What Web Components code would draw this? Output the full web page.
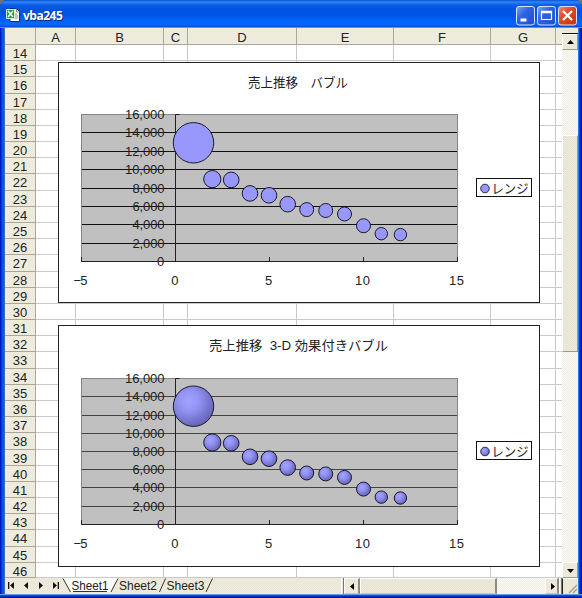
<!DOCTYPE html>
<html lang="ja">
<head>
<meta charset="utf-8">
<title>vba245</title>
<style>
html,body{margin:0;width:582px;height:598px;overflow:hidden;background:#75736b}
body{font:13px "Liberation Sans","Noto Sans CJK JP",sans-serif;color:#222}
</style>
</head>
<body>
<book-window>
  <title-bar slot="title">vba245</title-bar>
  <sheet-grid>
    <bubble-chart style="top:34px" caption="売上推移&#12288;バブル" tx="248" tw="100" top="62" bottom="302"
      lines="114,132,151,169,188,206,224,243,261" dy="0" legend="レンジ"></bubble-chart>
    <bubble-chart style="top:297px" caption="売上推移  3-D 効果付きバブル" tx="209" tw="179" top="325" bottom="566"
      lines="378,396,415,433,451,469,487,506,524" dy="263.4" legend="レンジ" relief></bubble-chart>
  </sheet-grid>
  <scroll-bar slot="side"></scroll-bar>
  <sheet-tabs slot="foot"></sheet-tabs>
</book-window>
<script>
const dither = (a, b) => `repeating-conic-gradient(${a} 0 25%,${b} 0 50%) 0 0/2px 2px`;
const define = (name, build) => customElements.define(name, class extends HTMLElement {
  connectedCallback() {
    if (!this.shadowRoot) this.attachShadow({mode: 'open'}).innerHTML = build(this);
  }
});

define('book-window', () => `<style>
:host{display:flex;flex-direction:column;box-sizing:border-box;width:582px;height:598px;border-radius:7px 7px 0 0;overflow:hidden;
 background:linear-gradient(90deg,#0019c8 0 1px,#0738de 1px 2px,#0455ea 2px 4px,#3c6fb4 4px 5px,transparent 5px 577px,#cfe0f4 577px 578px,#2a78f0 578px 579px,#0443dc 579px 580px,#0028b8 580px 581px,#001590 581px) 0 28px/582px 567px no-repeat,#0443dc}
main{display:grid;grid-template-columns:557px 16px;grid-template-rows:550px;padding-left:5px;overflow:hidden}
.foot{height:16px;padding:0 4px 0 5px}
.edge{height:4px;background:linear-gradient(#5f9cf0 0 1px,#0450e8 1px 2px,#0030c8 2px 3px,#00129a 3px)}
</style><slot name="title"></slot><main><slot></slot><slot name="side"></slot></main>
<div class="foot"><slot name="foot"></slot></div><div class="edge"></div>`);

define('title-bar', () => `<style>
:host{display:flex;align-items:center;box-sizing:border-box;height:28px;padding:3px 5px 0 6px;
 background:linear-gradient(#0a50d0 0,#2e86f8 2px,#0c5ee8 5px,#0054e0 9px,#0054e4 15px,#0464f8 21px,#0566fa 25px,#0048cc 27px,#6a93bd 27px)}
.name{flex:1;padding-left:3px;font:bold 12px "Open Sans",sans-serif;letter-spacing:-.5px;color:#fff;text-shadow:1px 1px #0a2a80;line-height:18px}
.buttons{display:flex;gap:2px}
</style>
<svg width="14" height="15" viewBox="0 0 14 15"><path d="M4 .5h6.5l3 3v10h-9.5z" fill="#fff" stroke="#123070"/><path d="M10.5 1v3h3M8 6h3M8 8h4M8 10h4" fill="none" stroke="#888"/><path d="M.5 1.5h8v9h-8z" fill="#2b9440" stroke="#d8f0d0"/><path d="M2 3l5 6M7 3L2 9" stroke="#fff" stroke-width="1.5"/></svg>
<span class="name"><slot></slot></span>
<span class="buttons">
${[['#2f63e0','M4.5 14h6'],['#2f63e0','M4.5 5.5h10v8h-10z'],['#de4a24','M5 5l9 9M14 5l-9 9']].map(([c, d], i) => `<svg width="19" height="20" viewBox="0 0 19 20"><defs><linearGradient id="face${i}" x1="0" y1="0" x2="1" y2="1"><stop offset="0" stop-color="${i == 2 ? '#f09070' : '#7ca4f8'}"/><stop offset=".4" stop-color="${c}"/><stop offset="1" stop-color="${i == 2 ? '#c83208' : '#1c50d0'}"/></linearGradient></defs><rect x=".5" y=".5" width="18" height="18.5" rx="2.5" fill="url(#face${i})" stroke="#d4e2fc"/><path d="${d}" fill="none" stroke="#fff" stroke-width="${i == 0 ? 3 : i == 1 ? 1.2 : 2.3}"/>${i == 1 ? '<path d="M4 6h11" stroke="#fff" stroke-width="2.5"/>' : ''}</svg>`).join('')}
</span>`);

const edge = k => Math.floor(44.5 + 16.18 * k) - 28;
const columns = [['', 31], ['A', 40], ['B', 88], ['C', 24], ['D', 109], ['E', 97], ['F', 97], ['G', 65], ['', 6]];
define('sheet-grid', () => {
  const tracks = [17, ...Array.from({length: 33}, (_, k) => (k == 32 ? 550 : edge(k + 1) + 1) - (edge(k) + 1))];
  let cells = '';
  tracks.forEach((_, r) => columns.forEach(([label], c) => {
    const head = r == 0 || c == 0;
    cells += `<div class="${head ? 'head' : 'cell'}${c == 0 && r ? ' row' : ''}">${r == 0 ? label : c == 0 ? r + 13 : ''}</div>`;
  }));
  return `<style>
:host{display:block;position:relative;width:557px;height:550px;overflow:hidden;background:#fff}
.grid{display:grid;grid-template-columns:${columns.map(c => c[1] + 'px').join(' ')};grid-template-rows:${tracks.map(t => t + 'px').join(' ')}}
.grid>div{box-sizing:border-box;border-right:1px solid #c9c9c9;border-bottom:1px solid #cacace;min-width:0;overflow:hidden}
.grid>.head{background:${dither('#ece9d8', '#efeee3')};border-color:#aaa799;font-size:13px;line-height:20px;text-align:center}
.grid>.row{line-height:18px}
.grid>div:nth-child(9n){border-right:0}
</style><div class="grid">${cells}</div><slot></slot>`;
});

const points = [[193.5,142.8,20.2],[212.3,179.1,8.6],[231.2,179.9,7.8],[250,193.4,7.8],[269,195.3,7.8],[287.7,204.2,7.8],[306.7,209.6,7],[325.7,210.5,7],[344.5,214,7],[363.5,225.7,7],[381.3,233.7,6.2],[400.4,234.6,6.2]];
define('bubble-chart', el => {
  const at = n => el.getAttribute(n), top = +at('top'), h = at('bottom') - top + 1;
  const ys = at('lines').split(',').map(Number), last = ys[8], relief = el.hasAttribute('relief');
  const grid = relief ? '#44443e' : '#111';
  const legendTop = relief ? 441 : 178;
  return `<style>
:host{display:block;position:absolute;left:53px;width:482px;height:${h}px}
svg{display:block}
text{font:13px "Liberation Sans","Noto Sans CJK JP",sans-serif;fill:#222}
</style><svg width="482" height="${h}" viewBox="58 ${top} 482 ${h}">
<defs><radialGradient id="ball" cx=".38" cy=".36" r=".66"><stop offset="0" stop-color="#a3a3ff"/><stop offset=".4" stop-color="#9292f4"/><stop offset="1" stop-color="#6464b8"/></radialGradient></defs>
<rect x="58.5" y="${top + .5}" width="481" height="${h - 1}" fill="#fff" stroke="#222"/>
<text x="${at('tx')}" y="${top + 24.5}" textLength="${at('tw')}" lengthAdjust="spacingAndGlyphs" xml:space="preserve">${at('caption')}</text>
<rect x="81.5" y="${ys[0] + .5}" width="376" height="${last - ys[0]}" fill="#c0c0c0" stroke="#858585"/>
${ys.slice(1, 8).map(y => `<path d="M82 ${y + .5}h375" stroke="${grid}"/>`).join('')}
<path d="M81.5 ${last - 4}v4.5h376v-4.5M269.5 ${last - 4}v4M363.5 ${last - 4}v4M175.5 ${last}V${ys[0] + .5}h4" fill="none" stroke="#222"/>
${ys.map((y, i) => { const v = (16000 - i * 2000).toLocaleString('en-US'), w = v.length == 6 ? 39.5 : v.length == 5 ? 32 : 7.5; return `<text x="${164.5 - w}" y="${y + 5.3}" textLength="${w}">${v}</text>`; }).join('')}
${points.map(([x, y, r]) => `<circle cx="${x}" cy="${y + +at('dy')}" r="${r}" fill="${relief ? 'url(#ball)' : '#9898fc'}" stroke="#181828"/>`).join('')}
${[['−5', 73.5, 14], ['0', 171.3, 7.5], ['5', 265, 7.2], ['10', 355, 15], ['15', 449, 15]].map(([t, x, w]) => `<text x="${x}" y="${last + 24}" textLength="${w}">${t}</text>`).join('')}
<rect x="476.5" y="${legendTop + .5}" width="55" height="18" fill="#fff" stroke="#111"/>
<circle cx="485" cy="${legendTop + 10.5}" r="4.3" fill="${relief ? 'url(#ball)' : '#9898fc'}" stroke="#282840"/>
<text x="491.5" y="${legendTop + 15}" textLength="37" lengthAdjust="spacingAndGlyphs">${at('legend')}</text>
</svg>`;
});

define('scroll-bar', () => `<style>
:host{display:grid;grid-template-rows:4px 2px 16px 1fr 217px 210px 16px;width:16px;height:550px;background:${dither('#fbfaf6', '#efece2')}}
div{box-sizing:border-box}
.rule{border-bottom:1px solid #111;background:#ece9d8}
.btn,.thumb{background:#ece9d8;border:1px solid #fff;border-right-color:#9d9a8a;border-bottom-color:#9d9a8a}
.thumb{background:${dither('#e6e3d2', '#eeebdb')}}
.cap{background:#ece9d8}
svg{display:block}
</style><div class="cap"></div><div class="rule"></div><div class="btn"><svg width="14" height="14"><path d="M4 9h7L7.5 5z"/></svg></div><div></div><div class="thumb"></div><div></div><div class="btn"><svg width="14" height="14"><path d="M4 6h7L7.5 10z"/></svg></div>`);

define('sheet-tabs', () => `<style>
:host{display:grid;grid-template-columns:336px 3px 16px 137px 48px 14px 3px 16px;width:573px;height:16px;background:#ece9d8}
div{box-sizing:border-box;height:16px}
svg{display:block}
text{font:13px "Liberation Sans",sans-serif;fill:#222}
.left{background:${dither('#e9e6d5', '#f0ede0')}}
.split{border-left:1px solid #fff;border-right:1px solid #777}
.btn,.thumb{background:#ece9d8;border:1px solid #fff;border-right:2px solid #8e8b7d;border-bottom-color:#c8c5b5}
.thumb{background:${dither('#e6e3d2', '#eeebdb')}}
.track{background:${dither('#fbfaf6', '#efece2')}}
.grip{border-left:1px solid #222;border-top:1px solid #fff}
</style><div class="left"><svg width="336" height="16" viewBox="5 578 336 16">
<path d="M63 578l8 14h39l8-14z" fill="#fff"/>
<path d="M63 578.5l7.5 13.5M118 578.5L111 592M165.5 578.5L159.5 592M212.5 578.5L206 592" stroke="#333" fill="none"/>
<path d="M8 582h1.3v7H8zM14 582v7l-4-3.5zM28 582v7l-4-3.5zM39 582v7l4-3.5zM53 582v7l4-3.5zM57.7 582H59v7h-1.3z" fill="#111"/>
<path d="M73 591.5h34" stroke="#333"/>
<text x="71.5" y="590" textLength="37" lengthAdjust="spacingAndGlyphs">Sheet1</text><text x="119" y="590" textLength="38" lengthAdjust="spacingAndGlyphs">Sheet2</text><text x="166.5" y="590" textLength="38" lengthAdjust="spacingAndGlyphs">Sheet3</text></svg></div>
<div class="split"></div><div class="btn"><svg width="13" height="14"><path d="M9 4v7L5 7.5z"/></svg></div><div class="thumb"></div><div class="track"></div><div class="btn"><svg width="12" height="14"><path d="M5 4v7l4-3.5z"/></svg></div><div class="split"></div>
<div class="grip"><svg width="15" height="15"><path d="M6 14l8-8M10 14l4-4" stroke="#a09c88" stroke-width="1.3"/></svg></div>`);
</script>
</body>
</html>
